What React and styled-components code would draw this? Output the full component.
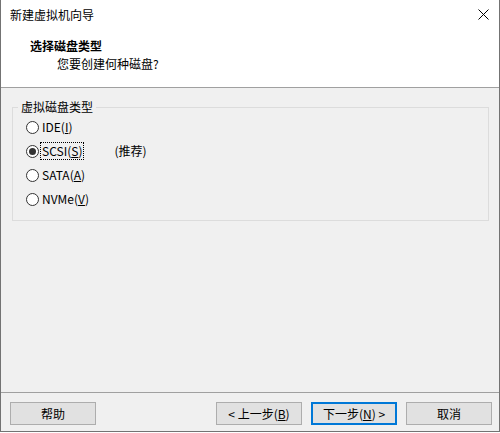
import styled, { createGlobalStyle } from "styled-components";

const disks = [
	{ name: "IDE", key: "I" },
	{ name: "SCSI", key: "S", checked: true, note: "(推荐)" },
	{ name: "SATA", key: "A" },
	{ name: "NVMe", key: "V" },
];

const Global = createGlobalStyle`
	html, body {
		margin: 0;
		padding: 0;
		background: #ffffff;
	}
	body {
		font-family: "Noto Sans CJK SC", "Noto Sans", sans-serif;
		font-size: 12px;
		color: #000000;
	}
`;

export default () => (
	<>
		<Global />
		<Window>
			<TitleBar>
				<Caption>新建虚拟机向导</Caption>
				<Close>
					<svg width="11" height="11" viewBox="0 0 11 11">
						<path d="M0.5 0.5 L10.5 10.5 M10.5 0.5 L0.5 10.5" stroke="#000" strokeWidth="1" />
					</svg>
				</Close>
			</TitleBar>
			<Header>
				<Heading>选择磁盘类型</Heading>
				<Subtitle>您要创建何种磁盘?</Subtitle>
			</Header>
			<Body>
				<Group>
					<Legend>虚拟磁盘类型</Legend>
					<Options>
						{disks.map((disk) => (
							<Option key={disk.name}>
								<Radio checked={disk.checked} />
								<Label focused={disk.checked}>
									{disk.name}(<u>{disk.key}</u>)
								</Label>
								{disk.note && <Note>{disk.note}</Note>}
							</Option>
						))}
					</Options>
				</Group>
			</Body>
			<Footer>
				<Button>帮助</Button>
				<Spacer />
				<Button>
					&lt; 上一步(<u>B</u>)
				</Button>
				<Button primary>
					下一步(<u>N</u>) &gt;
				</Button>
				<Button>取消</Button>
			</Footer>
		</Window>
	</>
);

const Window = styled.div`
	width: 500px;
	height: 432px;
	box-sizing: border-box;
	display: flex;
	flex-direction: column;
	border: 1px solid #737373;
	border-top: none;
	background: #f0f0f0;
`;

const TitleBar = styled.div`
	height: 30px;
	display: flex;
	align-items: center;
	justify-content: space-between;
	padding: 0 9px 1px 9px;
	background: #ffffff;
`;

const Caption = styled.span`
	line-height: 16px;
`;

const Close = styled.span`
	display: flex;
	margin-right: 1px;
	margin-top: -1px;
`;

const Header = styled.div`
	background: #ffffff;
	padding: 6px 0 14px 29px;
	border-bottom: 1px solid #a0a0a0;
`;

const Heading = styled.div`
	font-weight: bold;
	line-height: 18px;
`;

const Subtitle = styled.div`
	line-height: 18px;
	padding-left: 27px;
`;

const Body = styled.div`
	flex: 1;
	padding: 11px 10px 0 11px;
`;

const Group = styled.fieldset`
	margin: 0;
	padding: 0 0 9px 5px;
	border: 1px solid #dcdcdc;
	min-width: 0;
`;

const Legend = styled.legend`
	padding: 0 3px;
	line-height: 16px;
`;

const Options = styled.div`
	display: flex;
	flex-direction: column;
	padding: 0 0 0 8px;
`;

const Option = styled.div`
	display: flex;
	align-items: center;
	height: 24px;
`;

const Radio = styled.span`
	width: 13px;
	height: 13px;
	box-sizing: border-box;
	border-radius: 50%;
	border: 1px solid #333333;
	background: #ffffff;
	display: flex;
	align-items: center;
	justify-content: center;
	margin-right: 2px;

	&::after {
		content: "";
		display: ${(p) => (p.checked ? "block" : "none")};
		width: 7px;
		height: 7px;
		border-radius: 50%;
		background: #333333;
	}
`;

const Label = styled.span`
	line-height: 16px;
	padding: 0 1px;
	outline: ${(p) => (p.focused ? "1px dotted #000" : "none")};
	outline-offset: 0;
`;

const Note = styled.span`
	margin-left: 31px;
	line-height: 16px;
`;

const Footer = styled.div`
	height: 39px;
	box-sizing: border-box;
	border-top: 1px solid #a0a0a0;
	display: flex;
	align-items: flex-start;
	gap: 9px;
	padding: 9px 7px 0 9px;
`;

const Spacer = styled.div`
	flex: 1;
`;

const Button = styled.button`
	width: 86px;
	height: 23px;
	box-sizing: border-box;
	padding: 0;
	font-family: inherit;
	font-size: 12px;
	color: #000000;
	background: #e1e1e1;
	border: ${(p) => (p.primary ? "2px solid #0078d7" : "1px solid #adadad")};
	line-height: 16px;
`;
